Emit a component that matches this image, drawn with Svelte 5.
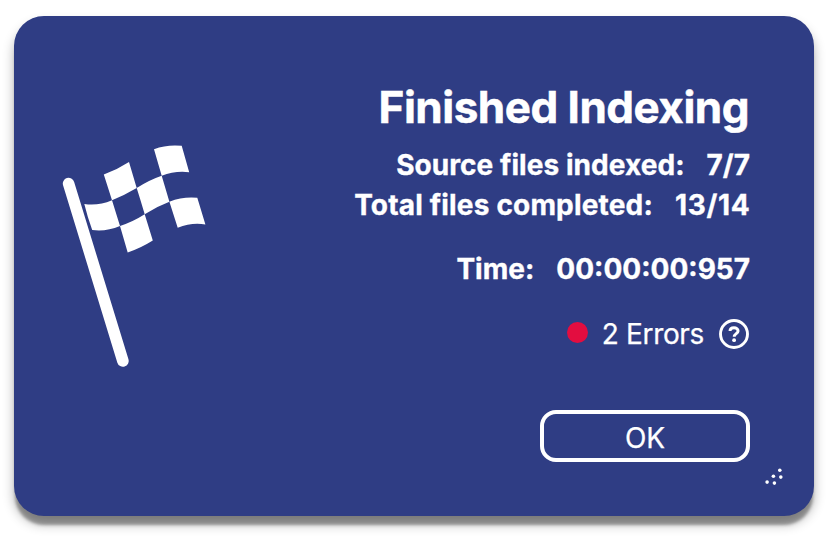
<script>
  const rows = [
    { label: 'Source files indexed:', value: '7/7', name: 'source' },
    { label: 'Total files completed:', value: '13/14', name: 'total' },
    { label: 'Time:', value: '00:00:00:957', name: 'time' }
  ];
</script>

<main>
  <section class="dialog">
    <svg class="flag" width="146" height="226" viewBox="61 143 146 226" aria-hidden="true">
      <path d="M68.6 183.6 122.9 361" stroke="#fff" stroke-width="11.6" stroke-linecap="round" />
      <g fill="#fff">
        <path d="M154 149.2Q167 144.3 181.7 145.8L189.2 172.2Q175 170.5 161.7 175.7Z" />
        <path d="M103.8 174.5Q117 169.8 129 162L136.7 188Q124 195.5 112 200.3Z" />
        <path d="M136.7 188Q149 180 161.7 175.7L169.4 201.7Q157 206.3 144.7 214.3Q140.8 201 136.7 188Z" />
        <path d="M84.3 204Q98 206.2 112 200.3L120 226Q106 231.9 92.2 230Q87.5 217 84.3 204Z" />
        <path d="M120 226Q133 221.8 144.7 214.3L152.8 240.5Q140 248.5 127.7 252.4Z" />
        <path d="M169.4 201.7Q183 196.4 197.3 197.8L205.4 224.5Q192 222 177.7 227.8Z" />
      </g>
    </svg>
    <div class="content">
      <h1>Finished Indexing</h1>
      {#each rows as row}
        <div class="row {row.name}"><span class="label">{row.label}</span><span class="value">{row.value}</span></div>
      {/each}
      <div class="errors">
        <span class="dot"></span>
        <span class="count">2 Errors</span>
        <svg width="30" height="30" viewBox="0 0 30 30" fill="none" stroke="#fff" aria-label="Help">
          <circle cx="15" cy="15" r="13.5" stroke-width="2.9" />
          <path d="M11 12.1C11 9.9 12.7 8.7 15 8.7S19.1 10 19.1 12C19.1 14.6 15.2 14.7 15.2 17.8" stroke-width="2.9" />
          <circle cx="15.1" cy="21.2" r="1.9" fill="#fff" stroke="none" />
        </svg>
      </div>
      <button>OK</button>
    </div>
    <svg class="grip" width="20" height="20" viewBox="764 466 20 20" fill="#fff" aria-hidden="true">
      <circle cx="779.8" cy="470.3" r="1.8" />
      <circle cx="773.4" cy="476.2" r="1.8" />
      <circle cx="780.8" cy="477.1" r="1.8" />
      <circle cx="767.1" cy="482.1" r="1.8" />
      <circle cx="774.4" cy="483.1" r="1.8" />
    </svg>
  </section>
</main>

<style>
  :global(body) { margin: 0; background: #fff; }
  main {
    box-sizing: border-box;
    width: 832px;
    height: 542px;
    padding: 16px 18px 26px 14px;
    overflow: hidden;
  }
  .dialog {
    position: relative;
    box-sizing: border-box;
    display: flex;
    justify-content: space-between;
    width: 800px;
    height: 500px;
    padding: 0 64px 0 47px;
    border-radius: 30px;
    background: #2f3d84;
    box-shadow: 0 10px 3px -1px rgba(0, 0, 0, .32), 0 8px 12px rgba(0, 0, 0, .3);
    color: #fff;
    font-family: Inter, "Liberation Sans", sans-serif;
  }
  .flag { margin-top: 127px; flex: none; fill: none; }
  .content {
    display: flex;
    flex-direction: column;
    align-items: flex-end;
    padding-top: 65px;
    white-space: nowrap;
  }
  h1 {
    margin: 0 1px 0 0;
    height: 64px;
    font-size: 44px;
    line-height: 53px;
    font-weight: 700;
    letter-spacing: -.5px;
    -webkit-text-stroke: .5px #fff;
  }
  .row {
    display: flex;
    height: 40px;
    line-height: 40px;
    font-size: 28px;
    font-weight: 700;
    -webkit-text-stroke: .35px #fff;
  }
  .value { margin-left: 22px; }
  .source .label { letter-spacing: .06px; }
  .total .label { letter-spacing: .18px; }
  .total .value { margin-left: 22px; margin-right: -.5px; letter-spacing: .7px; }
  .time { margin-top: 24px; }
  .errors {
    display: flex;
    align-items: center;
    height: 40px;
    margin: 25px 1px 0 0;
    font-size: 28px;
    letter-spacing: -.35px;
    -webkit-text-stroke: .25px #fff;
  }
  .dot {
    width: 21px;
    height: 21px;
    margin: 0 14px 4px 0;
    border-radius: 50%;
    background: #e30d40;
  }
  .count { margin-right: 15px; }
  button {
    box-sizing: border-box;
    width: 210px;
    height: 52px;
    margin-top: 56px;
    padding: 4px 0 0;
    border: 4px solid #fff;
    border-radius: 16px;
    background: transparent;
    color: #fff;
    font: 400 28px Inter, "Liberation Sans", sans-serif;
    -webkit-text-stroke: .25px #fff;
  }
  .grip { position: absolute; right: 30px; bottom: 30px; }
</style>
